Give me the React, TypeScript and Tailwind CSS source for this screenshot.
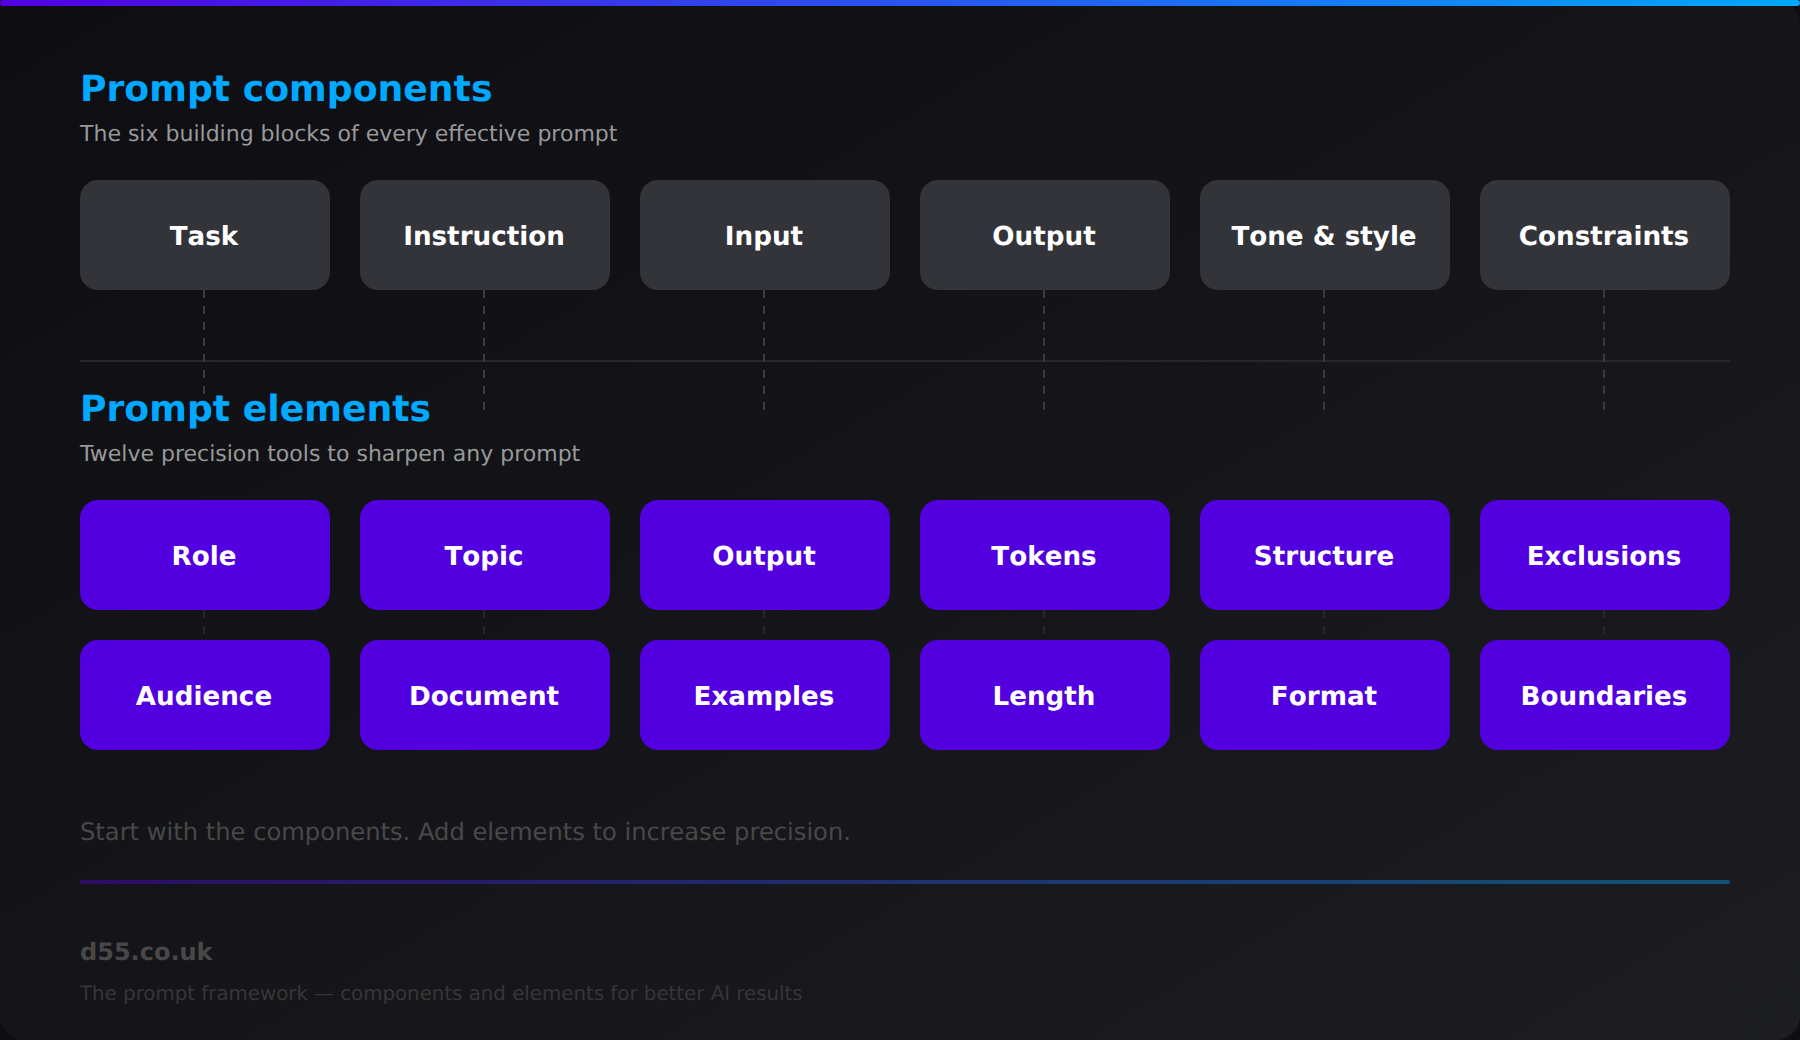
const components = ["Task", "Instruction", "Input", "Output", "Tone & style", "Constraints"];
const elementsTop = ["Role", "Topic", "Output", "Tokens", "Structure", "Exclusions"];
const elementsBottom = ["Audience", "Document", "Examples", "Length", "Format", "Boundaries"];

function Dashes({ height, className }: { height: number; className: string }) {
  return (
    <svg className={`absolute left-[123px] top-full w-[2px] ${className}`} height={height} aria-hidden="true">
      <line x1="1" y1="0" x2="1" y2={height} stroke="currentColor" strokeWidth="2" strokeDasharray="8 8" />
    </svg>
  );
}

function Card({ label, purple, dash }: { label: string; purple?: boolean; dash?: "long" | "short" }) {
  return (
    <div
      className={`relative flex h-[110px] w-[250px] items-center justify-center rounded-[18px] pt-[5px] text-[26.2px] font-bold text-white [font-kerning:none] ${
        purple ? "bg-[#5200e0]" : "bg-[#33343a]"
      }`}
    >
      <span className="relative z-10 -translate-x-px">{label}</span>
      {dash === "long" && <Dashes height={120} className="text-[#3a3a42]" />}
      {dash === "short" && <Dashes height={30} className="text-[#26262c]" />}
    </div>
  );
}

export default function App() {
  return (
    <div className="h-[1040px] w-[1800px] bg-[#0d0d12] font-['DejaVu_Sans',sans-serif] [text-rendering:geometricPrecision]">
      <div className="relative h-full rounded-[24px] bg-linear-to-br/srgb from-[#0d0d12] to-[#1c1d20] pl-[80px] pr-[70px]">
        <div className="absolute inset-x-0 top-0 h-[6px] rounded-[3px] bg-linear-to-r/srgb from-[#5200e0] to-[#00a8ff]" />

        <div className="relative z-10 pt-[67px]">
          <h1 className="text-[36.2px] font-bold leading-[44px] text-[#00a8ff] [font-kerning:none]">Prompt components</h1>
          <p className="mt-[10px] text-[22px] leading-[28px] text-[#999999]">The six building blocks of every effective prompt</p>
        </div>
        <div className="mt-[31px] flex gap-[30px]">
          {components.map((c) => (
            <Card key={c} label={c} dash="long" />
          ))}
        </div>

        <div className="mt-[70px] h-[2px] bg-[#26262c]" />

        <div className="relative z-10 pt-[25px]">
          <h2 className="text-[36.2px] font-bold leading-[44px] text-[#00a8ff] [font-kerning:none]">Prompt elements</h2>
          <p className="mt-[10px] text-[22px] leading-[28px] text-[#999999]">Twelve precision tools to sharpen any prompt</p>
        </div>
        <div className="mt-[31px] flex gap-[30px]">
          {elementsTop.map((c) => (
            <Card key={c} label={c} purple dash="short" />
          ))}
        </div>
        <div className="mt-[30px] flex gap-[30px]">
          {elementsBottom.map((c) => (
            <Card key={c} label={c} purple />
          ))}
        </div>

        <p className="mt-[66px] text-[24.2px] leading-[32px] text-[#484848]">Start with the components. Add elements to increase precision.</p>
        <div className="mt-[32px] h-[4px] rounded-[2px] bg-linear-to-r/srgb from-[#5200e0]/40 to-[#00a8ff]/40" />
        <p className="mt-[52px] text-[24px] font-bold leading-[32px] text-[#484848]">d55.co.uk</p>
        <p className="mt-[13px] text-[19.8px] leading-[26px] text-[#363636]">The prompt framework — components and elements for better AI results</p>
      </div>
    </div>
  );
}
